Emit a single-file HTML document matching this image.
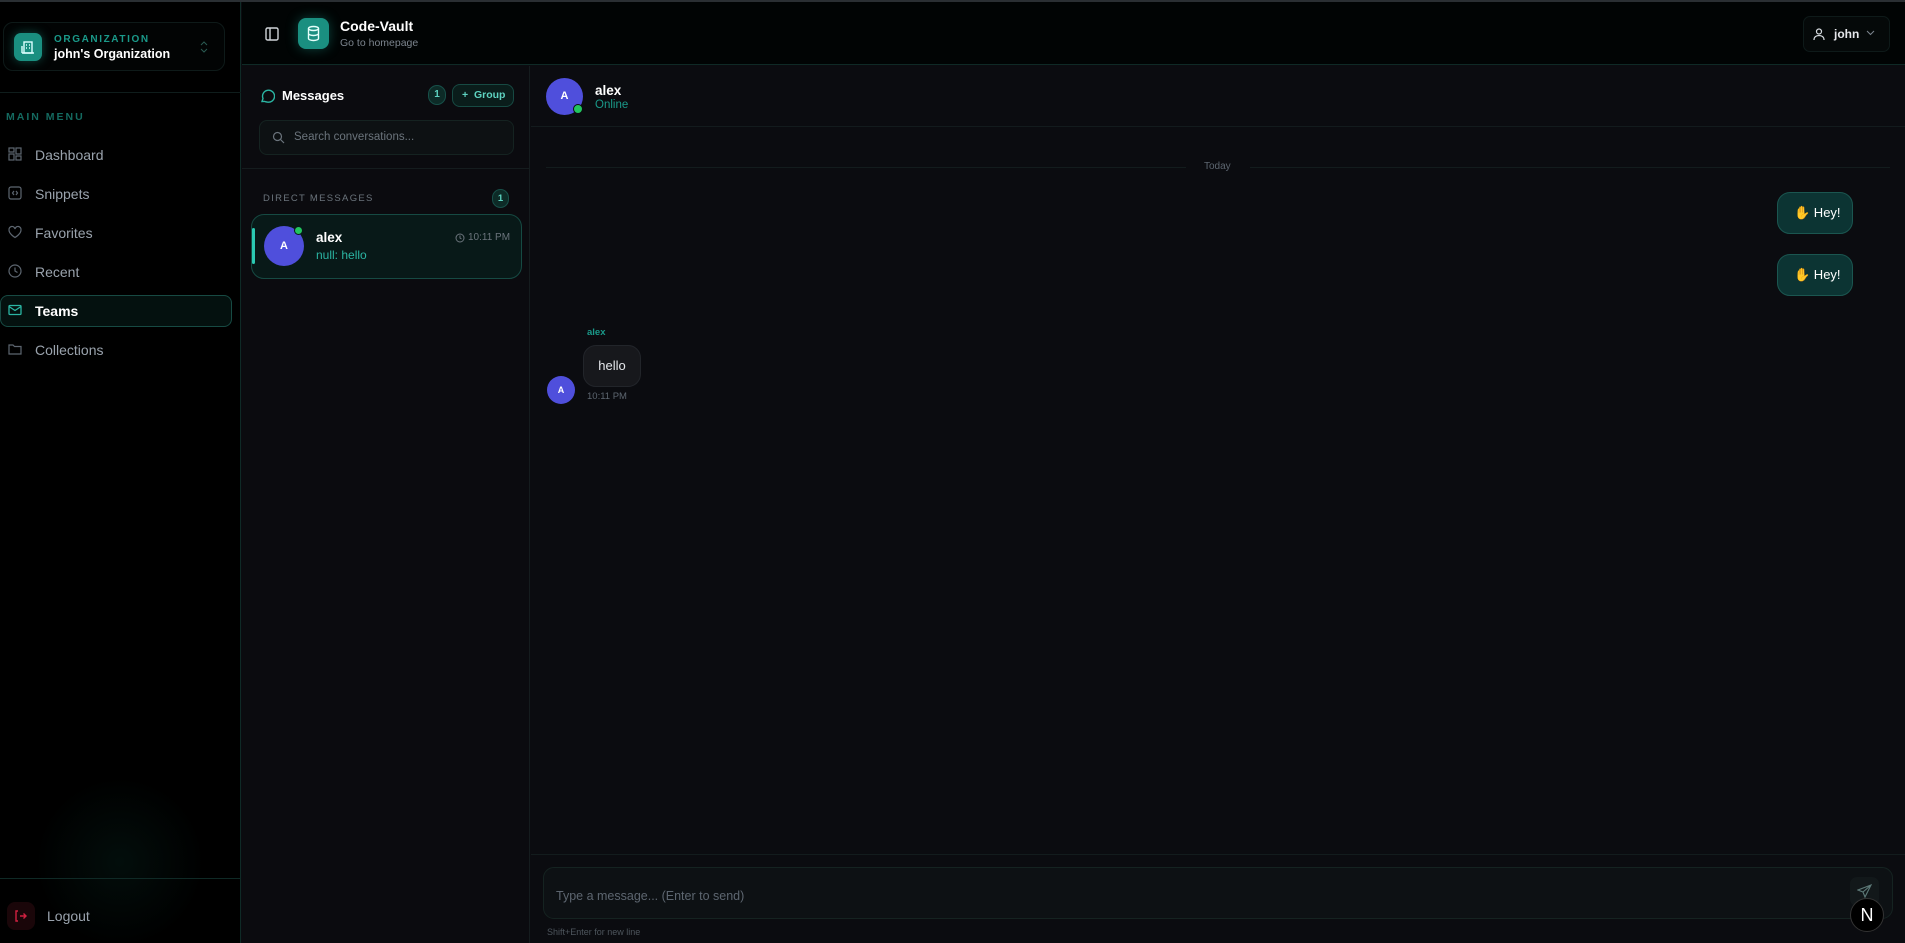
<!DOCTYPE html>
<html><head><meta charset="utf-8"><style>
*{box-sizing:border-box;margin:0;padding:0}
body{width:1905px;height:943px;overflow:hidden;background:#0b0c10;font-family:"Liberation Sans",sans-serif;position:relative;color:#e5e7eb}
.a{position:absolute}
svg{display:block}
</style></head><body>
<div class="a" style="left:0;top:0;width:1905px;height:2px;background:#2a2f33"></div>
<div class="a" style="left:0;top:2px;width:241px;height:941px;background:#000;border-right:1px solid #0f2a26;overflow:hidden">
  <div class="a" style="left:20px;top:760px;width:200px;height:200px;background:radial-gradient(circle,rgba(16,90,75,.15),rgba(0,0,0,0) 60%)"></div>
</div>
<div class="a" style="left:3px;top:22px;width:222px;height:49px;border:1px solid #0e1a19;border-radius:10px;background:#020404"></div>
<div class="a" style="left:14px;top:33px;width:28px;height:28px;border-radius:7px;background:#1a8f80;box-shadow:0 0 10px rgba(26,143,128,.5)">
<svg width="28" height="28" viewBox="0 0 28 28" fill="none" stroke="#dff" stroke-width="1.4"><rect x="10" y="9" width="8" height="11"/><path d="M8 20h12M8 13v7M12 12h1M15 12h1M12 15h1M15 15h1"/></svg></div>
<div class="a" style="left:54px;top:34px;font-size:10px;letter-spacing:1.6px;color:#1a9a8a;font-weight:bold">ORGANIZATION</div>
<div class="a" style="left:54px;top:47px;font-size:12.5px;color:#fff;font-weight:bold">john's Organization</div>
<svg class="a" style="left:198px;top:39px" width="12" height="16" viewBox="0 0 12 16" fill="none"><path d="M3 6l3-3 3 3M3 10l3 3 3-3" stroke="#2a5a52"/></svg>
<div class="a" style="left:0;top:92px;width:241px;height:1px;background:#0f1d1c"></div>
<div class="a" style="left:6px;top:111px;font-size:10.5px;letter-spacing:2px;color:#146a60;font-weight:bold">MAIN MENU</div>
<div class="a" style="left:0;top:295px;width:232px;height:32px;border:1px solid #174a43;border-radius:8px;background:#04110f"></div>
<div style="font-size:14px;color:#9aa3ad">
<svg class="a" style="left:7px;top:146px" width="16" height="16" viewBox="0 0 16 16" fill="none" stroke="#5d6670" stroke-width="1.2"><rect x="2" y="2" width="5" height="4"/><rect x="9" y="2" width="5" height="6"/><rect x="2" y="8" width="5" height="6"/><rect x="9" y="10" width="5" height="4"/></svg>
<div class="a" style="left:35px;top:147px">Dashboard</div>
<svg class="a" style="left:7px;top:185px" width="16" height="16" viewBox="0 0 16 16" fill="none" stroke="#5d6670" stroke-width="1.2"><rect x="2" y="2" width="12" height="12" rx="2"/><path d="M7 6L5.5 8 7 10M9 6l1.5 2L9 10"/></svg>
<div class="a" style="left:35px;top:186px">Snippets</div>
<svg class="a" style="left:7px;top:224px" width="16" height="16" viewBox="0 0 16 16" fill="none" stroke="#5d6670" stroke-width="1.2"><path d="M8 13.5S2 10 2 6a3 3 0 016-1 3 3 0 016 1c0 4-6 7.5-6 7.5z"/></svg>
<div class="a" style="left:35px;top:225px">Favorites</div>
<svg class="a" style="left:7px;top:263px" width="16" height="16" viewBox="0 0 16 16" fill="none" stroke="#5d6670" stroke-width="1.2"><circle cx="8" cy="8" r="6"/><path d="M8 4.5V8l2.5 1.5"/></svg>
<div class="a" style="left:35px;top:264px">Recent</div>
<svg class="a" style="left:7px;top:302px" width="16" height="16" viewBox="0 0 16 16" fill="none" stroke="#2bb5a3" stroke-width="1.3"><rect x="2" y="3.5" width="12" height="9" rx="1"/><path d="M2 4.5l6 4 6-4"/></svg>
<div class="a" style="left:35px;top:303px;color:#fff;font-weight:bold">Teams</div>
<svg class="a" style="left:7px;top:341px" width="16" height="16" viewBox="0 0 16 16" fill="none" stroke="#5d6670" stroke-width="1.2"><path d="M2 4h4l1.5 1.5H14V13H2z"/></svg>
<div class="a" style="left:35px;top:342px">Collections</div>
</div>
<div class="a" style="left:0;top:878px;width:241px;height:1px;background:#0f2a26"></div>
<div class="a" style="left:7px;top:902px;width:28px;height:28px;border-radius:8px;background:#1a0609">
<svg width="28" height="28" viewBox="0 0 28 28" fill="none" stroke="#d02040" stroke-width="1.4"><path d="M11 9H9v10h2M13 14h6M16.5 11.5L19 14l-2.5 2.5"/></svg></div>
<div class="a" style="left:47px;top:908px;font-size:14px;color:#9aa3ad">Logout</div>

<div class="a" style="left:242px;top:2px;width:1663px;height:63px;background:#010404;border-bottom:1px solid #0f2a26"></div>
<svg class="a" style="left:264px;top:26px" width="16" height="16" viewBox="0 0 16 16" fill="none" stroke="#cfd4d8" stroke-width="1.4"><rect x="2" y="2" width="12" height="12" rx="1.5"/><path d="M6 2v12"/></svg>
<div class="a" style="left:298px;top:18px;width:31px;height:31px;border-radius:8px;background:#1a8f80;box-shadow:0 0 12px rgba(26,143,128,.45)">
<svg width="31" height="31" viewBox="0 0 31 31" fill="none" stroke="#e6fffb" stroke-width="1.4"><ellipse cx="15.5" cy="10.5" rx="5" ry="2"/><path d="M10.5 10.5v10c0 1.1 2.2 2 5 2s5-.9 5-2v-10M10.5 15.5c0 1.1 2.2 2 5 2s5-.9 5-2"/></svg></div>
<div class="a" style="left:340px;top:18px;font-size:14px;color:#fff;font-weight:bold">Code-Vault</div>
<div class="a" style="left:340px;top:37px;font-size:10.5px;color:#7c858e">Go to homepage</div>
<div class="a" style="left:1803px;top:16px;width:87px;height:36px;border:1px solid #0e1a19;border-radius:7px;background:#050909"></div>
<svg class="a" style="left:1812px;top:27px" width="14" height="14" viewBox="0 0 14 14" fill="none" stroke="#d8dde1" stroke-width="1.2"><circle cx="7" cy="4.5" r="2.5"/><path d="M2 13c0-3 2.2-4.5 5-4.5s5 1.5 5 4.5"/></svg>
<div class="a" style="left:1834px;top:27px;font-size:12px;color:#e5e7eb;font-weight:bold">john</div>
<svg class="a" style="left:1866px;top:30px" width="9" height="6" viewBox="0 0 9 6" fill="none" stroke="#7c858e"><path d="M1 1l3.5 3.5L8 1"/></svg>

<div class="a" style="left:242px;top:66px;width:288px;height:877px;background:#0b0b0f;border-right:1px solid #151c1e"></div>
<svg class="a" style="left:259px;top:88px" width="16" height="16" viewBox="0 0 16 16" fill="none" stroke="#2bb5a3" stroke-width="1.4"><path d="M3 13.5l1-3A6 6 0 118 14a6 6 0 01-2.5-.6z"/></svg>
<div class="a" style="left:282px;top:88px;font-size:13px;color:#fff;font-weight:bold">Messages</div>
<div class="a" style="left:428px;top:85px;width:18px;height:20px;border-radius:9px;background:#0d2b27;border:1px solid #175049;font-size:10px;color:#5ed3c1;text-align:center;line-height:18px;font-weight:bold">1</div>
<div class="a" style="left:452px;top:84px;width:62px;height:23px;border-radius:8px;background:#0a1d1b;border:1px solid #174a43;font-size:10.5px;color:#5ed3c1;line-height:21px;font-weight:bold;padding-left:9px">+&nbsp; Group</div>
<div class="a" style="left:259px;top:120px;width:255px;height:35px;border-radius:8px;background:#0d1113;border:1px solid #152321"></div>
<svg class="a" style="left:272px;top:131px" width="13" height="13" viewBox="0 0 13 13" fill="none" stroke="#6b747c" stroke-width="1.2"><circle cx="5.5" cy="5.5" r="4"/><path d="M8.5 8.5L12 12"/></svg>
<div class="a" style="left:294px;top:131px;font-size:11.5px;color:#6b747c">Search conversations...</div>
<div class="a" style="left:242px;top:168px;width:288px;height:1px;background:#151c1e"></div>
<div class="a" style="left:263px;top:193px;font-size:9.5px;letter-spacing:1.3px;color:#6b747c">DIRECT MESSAGES</div>
<div class="a" style="left:492px;top:189px;width:17px;height:19px;border-radius:9px;background:#0d2b27;border:1px solid #175049;font-size:9.5px;color:#5ed3c1;text-align:center;line-height:17px;font-weight:bold">1</div>
<div class="a" style="left:251px;top:214px;width:271px;height:65px;border-radius:13px;background:#081918;border:1px solid #164a43"></div>
<div class="a" style="left:252px;top:228px;width:3px;height:36px;border-radius:2px;background:#2bc9b2"></div>
<div class="a" style="left:264px;top:226px;width:40px;height:40px;border-radius:50%;background:#4f4fdc;color:#fff;font-size:11px;font-weight:bold;text-align:center;line-height:40px">A</div>
<div class="a" style="left:294px;top:226px;width:9px;height:9px;border-radius:50%;background:#22c55e;border:1px solid #081918"></div>
<div class="a" style="left:316px;top:230px;font-size:13.5px;color:#fff;font-weight:bold">alex</div>
<div class="a" style="left:316px;top:248px;font-size:12px;color:#2bb5a3">null: hello</div>
<svg class="a" style="left:455px;top:233px" width="10" height="10" viewBox="0 0 10 10" fill="none" stroke="#6b747c"><circle cx="5" cy="5" r="4"/><path d="M5 2.5V5l1.5 1"/></svg>
<div class="a" style="left:468px;top:232px;font-size:10px;color:#6b747c">10:11 PM</div>

<div class="a" style="left:531px;top:126px;width:1374px;height:1px;background:#131b1d"></div>
<div class="a" style="left:546px;top:78px;width:37px;height:37px;border-radius:50%;background:#4f4fdc;color:#fff;font-size:11px;font-weight:bold;text-align:center;line-height:37px">A</div>
<div class="a" style="left:573px;top:104px;width:10px;height:10px;border-radius:50%;background:#22c55e;border:1px solid #0b0c10"></div>
<div class="a" style="left:595px;top:83px;font-size:13.5px;color:#fff;font-weight:bold">alex</div>
<div class="a" style="left:595px;top:99px;font-size:11.5px;color:#1a9a8a">Online</div>
<div class="a" style="left:546px;top:167px;width:640px;height:1px;background:#131c1d"></div>
<div class="a" style="left:1250px;top:167px;width:640px;height:1px;background:#131c1d"></div>
<div class="a" style="left:1204px;top:161px;font-size:10px;color:#5d6670">Today</div>
<div class="a" style="left:1777px;top:192px;width:76px;height:42px;border-radius:13px;background:#0c3433;border:1px solid #1b5650;color:#fff;font-size:13px;line-height:40px;padding-left:16px"><span style="color:#f0b429">✋</span> Hey!</div>
<div class="a" style="left:1777px;top:254px;width:76px;height:42px;border-radius:13px;background:#0c3433;border:1px solid #1b5650;color:#fff;font-size:13px;line-height:40px;padding-left:16px"><span style="color:#f0b429">✋</span> Hey!</div>
<div class="a" style="left:587px;top:327px;font-size:9.5px;color:#1a9a8a;font-weight:bold">alex</div>
<div class="a" style="left:583px;top:345px;width:58px;height:42px;border-radius:13px;background:#17181c;border:1px solid #22252a;color:#e5e7eb;font-size:13px;line-height:40px;text-align:center">hello</div>
<div class="a" style="left:547px;top:376px;width:28px;height:28px;border-radius:50%;background:#4f4fdc;color:#fff;font-size:9px;font-weight:bold;text-align:center;line-height:28px">A</div>
<div class="a" style="left:587px;top:391px;font-size:9.5px;color:#5d6670">10:11 PM</div>

<div class="a" style="left:531px;top:854px;width:1374px;height:1px;background:#131c1d"></div>
<div class="a" style="left:543px;top:867px;width:1350px;height:52px;border-radius:11px;background:#0d1114;border:1px solid #152321"></div>
<div class="a" style="left:556px;top:889px;font-size:12.5px;color:#5d6670">Type a message... (Enter to send)</div>
<div class="a" style="left:1850px;top:877px;width:29px;height:29px;border-radius:7px;background:#12181a"></div>
<svg class="a" style="left:1857px;top:884px" width="15" height="15" viewBox="0 0 15 15" fill="none" stroke="#5d7a78" stroke-width="1.1"><path d="M14 1L1 6l5 2 2 5z M14 1L6 8"/></svg>
<div class="a" style="left:1850px;top:898px;width:34px;height:34px;border-radius:50%;background:#000;border:1px solid #333;color:#fff;font-size:18px;text-align:center;line-height:32px">N</div>
<div class="a" style="left:547px;top:927px;font-size:9px;color:#4d555c">Shift+Enter for new line</div>
</body></html>
